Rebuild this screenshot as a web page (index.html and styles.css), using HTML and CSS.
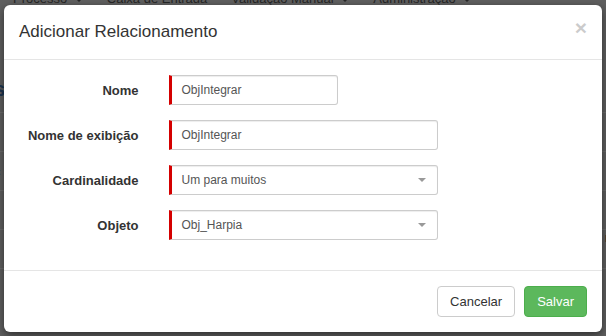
FILE: index.html
```html
<!DOCTYPE html>
<html lang="pt-BR">
<head>
    <meta charset="UTF-8">
    <meta name="viewport" content="width=device-width, initial-scale=1.0">
    <title>Adicionar Relacionamento</title>
    <link rel="stylesheet" href="styles.css">
</head>
<body>
    <div class="page">
        <nav class="topnav">
            <span class="nav-item">Processo <span class="caret"></span></span>
            <span class="nav-item">Caixa de Entrada</span>
            <span class="nav-item">Validação Manual <span class="caret"></span></span>
            <span class="nav-item">Administração <span class="caret"></span></span>
        </nav>
        <div class="page-rows">
            <div class="page-row row-head"><span class="edge-text">s</span><span class="edge-text">i</span></div>
            <div class="page-row"></div>
            <div class="page-row row-mid"><span class="edge-text small">c</span></div>
            <div class="page-row"></div>
            <div class="page-row"><span class="edge-text small"></span><span class="edge-text small">n</span></div>
        </div>
    </div>

    <div class="modal">
        <div class="modal-header">
            <h4 class="modal-title">Adicionar Relacionamento</h4>
            <button class="close" type="button">&times;</button>
        </div>

        <div class="modal-body">
            <div class="form-row">
                <label>Nome</label>
                <div class="field field-sm">ObjIntegrar</div>
            </div>
            <div class="form-row">
                <label>Nome de exibição</label>
                <div class="field field-md">ObjIntegrar</div>
            </div>
            <div class="form-row">
                <label>Cardinalidade</label>
                <div class="field field-md select">Um para muitos <span class="select-arrow"></span></div>
            </div>
            <div class="form-row">
                <label>Objeto</label>
                <div class="field field-md select">Obj_Harpia <span class="select-arrow"></span></div>
            </div>
        </div>

        <div class="modal-footer">
            <button class="btn btn-default" type="button">Cancelar</button>
            <button class="btn btn-success" type="button">Salvar</button>
        </div>
    </div>
</body>
</html>
```

FILE: styles.css
```css
body {
    margin: 0;
    height: 336px;
    overflow: hidden;
    position: relative;
    background-color: #5f5f5f;
    font-family: "Liberation Sans", Arial, sans-serif;
}
.topnav {
    display: flex;
    gap: 24px;
    margin-top: -10px;
    padding-left: 13px;
    font-size: 13px;
    line-height: 18px;
    color: #262626;
}
.caret {
    display: inline-block;
    margin-left: 4px;
    vertical-align: middle;
    border-top: 4px solid #262626;
    border-left: 4px solid transparent;
    border-right: 4px solid transparent;
}
.page-rows {
    margin-top: 70px;
}
.page-row {
    display: flex;
    justify-content: space-between;
    height: 38px;
    border-bottom: 1px solid #6b6b6b;
    font-size: 20px;
    color: #1d3550;
}
.row-head {
    height: 34px;
    font-weight: bold;
}
.row-mid {
    align-items: center;
}
.edge-text {
    margin: 0 -6px;
}
.edge-text.small {
    font-size: 13px;
    color: #1c1c1c;
}

/* modal */
.modal {
    position: absolute;
    left: 4px;
    top: 5px;
    width: 598px;
    background-color: #fff;
    border-radius: 6px;
    box-shadow: 0 3px 9px rgba(0, 0, 0, 0.5);
}
.modal-header {
    display: flex;
    justify-content: space-between;
    align-items: flex-start;
    padding: 15px;
    border-bottom: 1px solid #e5e5e5;
}
.modal-title {
    margin: 0;
    font-size: 17px;
    font-weight: normal;
    line-height: 24px;
    color: #333;
}
.close {
    margin-top: -3px;
    padding: 0;
    border: 0;
    background: none;
    font-family: "Liberation Sans", Arial, sans-serif;
    font-size: 21px;
    font-weight: bold;
    line-height: 1;
    color: #000;
    opacity: 0.2;
}
.modal-body {
    padding: 15px;
}
.form-row {
    display: grid;
    grid-template-columns: 119.5px 1fr;
    column-gap: 30px;
    align-items: center;
    margin-bottom: 15px;
}
.form-row label {
    text-align: right;
    font-size: 13px;
    font-weight: bold;
    color: #333;
}
.field {
    box-sizing: border-box;
    height: 30px;
    padding: 0 10px;
    border: 1px solid #ccc;
    border-left: 3px solid #d40000;
    border-radius: 0 3px 3px 0;
    box-shadow: inset 0 1px 1px rgba(0, 0, 0, 0.075);
    font-size: 12px;
    line-height: 28px;
    color: #555;
}
.field-sm {
    width: 169px;
}
.field-md {
    width: 269px;
}
.select {
    display: flex;
    justify-content: space-between;
    align-items: center;
    padding-right: 11px;
}
.select-arrow {
    border-top: 4px solid #999;
    border-left: 4px solid transparent;
    border-right: 4px solid transparent;
}
.modal-footer {
    display: flex;
    justify-content: flex-end;
    gap: 9px;
    padding: 15px;
    border-top: 1px solid #e5e5e5;
}
.btn {
    height: 31px;
    padding: 0 12px;
    border: 1px solid;
    border-radius: 4px;
    font-family: "Liberation Sans", Arial, sans-serif;
    font-size: 13px;
    line-height: 29px;
}
.btn-default {
    background-color: #fff;
    border-color: #ccc;
    color: #333;
}
.btn-success {
    background-color: #5cb85c;
    border-color: #4cae4c;
    color: #fff;
}
```
